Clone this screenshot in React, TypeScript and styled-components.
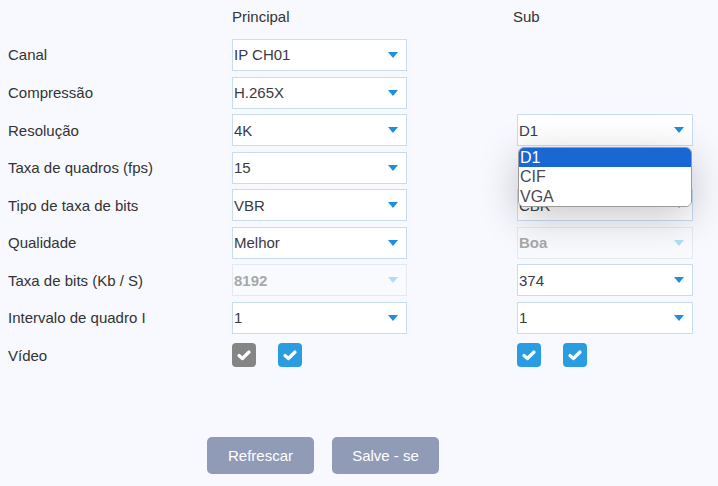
import React from "react";
import styled, { createGlobalStyle } from "styled-components";

const Global = createGlobalStyle`
  html, body { margin: 0; padding: 0; background: #f7f9fe; }
  body { font-family: "Liberation Sans", Arial, sans-serif; font-size: 15px; color: #333; }
  #root { width: 718px; height: 486px; overflow: hidden; }
`;

const Page = styled.div`
  width: 718px;
  height: 486px;
  display: flex;
  flex-direction: column;
`;

const Form = styled.div`
  display: grid;
  grid-template-columns: 224px 175px 110px 176px;
  grid-template-rows: 27.4px;
  grid-auto-rows: 32px;
  row-gap: 5.57px;
  padding: 6px 0 0 8px;
  align-items: center;
`;

const HeaderCell = styled.div<{ $col: number; $shift?: number }>`
  grid-column: ${(p) => p.$col};
  align-self: start;
  height: 22px;
  line-height: 22px;
  color: #333;
  margin-left: ${(p) => p.$shift ?? 0}px;
`;

const HeaderRow = styled.div`
  display: contents;
`;

const Label = styled.div`
  grid-column: 1;
  color: #333;
  white-space: nowrap;
`;

const Cell = styled.div<{ $col: number }>`
  grid-column: ${(p) => p.$col};
  position: relative;
  height: 100%;
  display: flex;
  align-items: center;
`;

const SelectBox = styled.div<{ $disabled?: boolean }>`
  box-sizing: border-box;
  width: 100%;
  height: 32px;
  display: flex;
  align-items: center;
  justify-content: space-between;
  padding: 0 5px 0 1px;
  background: ${(p) => (p.$disabled ? "#f8fafe" : "#ffffff")};
  border: 1px solid ${(p) => (p.$disabled ? "#e3e9f3" : "#c9dcf0")};
  color: ${(p) => (p.$disabled ? "#a8a8a8" : "#3a3a44")};
  font-weight: ${(p) => (p.$disabled ? 700 : 400)};
  font-size: 15px;
`;

const Arrow = styled.span<{ $disabled?: boolean }>`
  width: 0;
  height: 0;
  border-left: 5px solid transparent;
  border-right: 5px solid transparent;
  border-top: 6px solid ${(p) => (p.$disabled ? "#b3dcf5" : "#1d8fde")};
  margin-right: 3px;
`;

const CheckRow = styled.div`
  display: flex;
  gap: 22px;
  align-items: center;
`;

const CheckBox = styled.span<{ $gray?: boolean }>`
  width: 24px;
  height: 24px;
  border-radius: 4px;
  background: ${(p) => (p.$gray ? "#858585" : "#2a9de2")};
  display: flex;
  align-items: center;
  justify-content: center;
`;

const Dropdown = styled.div`
  position: absolute;
  top: 33px;
  left: 1px;
  width: 174px;
  box-sizing: border-box;
  background: #fff;
  border: 1px solid #9a9a9a;
  border-radius: 6px;
  overflow: hidden;
  box-shadow: 0 10px 40px rgba(0, 0, 0, 0.22);
  z-index: 5;
`;

const Option = styled.div<{ $selected?: boolean }>`
  height: 19.3px;
  line-height: 19px;
  font-size: 16px;
  padding-left: 1px;
  background: ${(p) => (p.$selected ? "#1967d2" : "#fff")};
  color: ${(p) => (p.$selected ? "#fff" : "#4a4a55")};
`;

const Buttons = styled.div`
  display: flex;
  gap: 18px;
  padding-left: 207px;
  margin-top: 66px;
`;

const Button = styled.button`
  width: 107px;
  height: 37px;
  border: none;
  border-radius: 5px;
  background: #8f9bb7;
  color: #fff;
  font-family: "Liberation Sans", Arial, sans-serif;
  font-size: 15px;
  padding: 0;
`;

const Check = () => (
  <svg width="16" height="14" viewBox="0 0 16 14">
    <polyline
      points="3,7.5 6.4,10.5 13,4"
      fill="none"
      stroke="#fff"
      strokeWidth="3.2"
      strokeLinecap="round"
      strokeLinejoin="round"
    />
  </svg>
);

type Sel = { value: string; disabled?: boolean; open?: string[] } | null;

const rows: { label: string; main: Sel; sub: Sel }[] = [
  { label: "Canal", main: { value: "IP CH01" }, sub: null },
  { label: "Compressão", main: { value: "H.265X" }, sub: null },
  { label: "Resolução", main: { value: "4K" }, sub: { value: "D1", open: ["D1", "CIF", "VGA"] } },
  { label: "Taxa de quadros (fps)", main: { value: "15" }, sub: null },
  { label: "Tipo de taxa de bits", main: { value: "VBR" }, sub: { value: "CBR" } },
  { label: "Qualidade", main: { value: "Melhor" }, sub: { value: "Boa", disabled: true } },
  { label: "Taxa de bits (Kb / S)", main: { value: "8192", disabled: true }, sub: { value: "374" } },
  { label: "Intervalo de quadro I", main: { value: "1" }, sub: { value: "1" } },
];

const Select = ({ s }: { s: NonNullable<Sel> }) => (
  <>
    <SelectBox $disabled={s.disabled}>
      <span>{s.value}</span>
      <Arrow $disabled={s.disabled} />
    </SelectBox>
    {s.open && (
      <Dropdown>
        {s.open.map((o, i) => (
          <Option key={o} $selected={i === 0}>
            {o}
          </Option>
        ))}
      </Dropdown>
    )}
  </>
);

export default function App() {
  return (
    <Page>
      <Global />
      <Form>
        <HeaderRow>
          <HeaderCell $col={2}>Principal</HeaderCell>
          <HeaderCell $col={4} $shift={-4}>
            Sub
          </HeaderCell>
        </HeaderRow>
        {rows.map((r) => (
          <React.Fragment key={r.label}>
            <Label>{r.label}</Label>
            <Cell $col={2}>{r.main && <Select s={r.main} />}</Cell>
            <Cell $col={4}>{r.sub && <Select s={r.sub} />}</Cell>
          </React.Fragment>
        ))}
        <Label>Vídeo</Label>
        <Cell $col={2}>
          <CheckRow>
            <CheckBox $gray>
              <Check />
            </CheckBox>
            <CheckBox>
              <Check />
            </CheckBox>
          </CheckRow>
        </Cell>
        <Cell $col={4}>
          <CheckRow>
            <CheckBox>
              <Check />
            </CheckBox>
            <CheckBox>
              <Check />
            </CheckBox>
          </CheckRow>
        </Cell>
      </Form>
      <Buttons>
        <Button>Refrescar</Button>
        <Button>Salve - se</Button>
      </Buttons>
    </Page>
  );
}
